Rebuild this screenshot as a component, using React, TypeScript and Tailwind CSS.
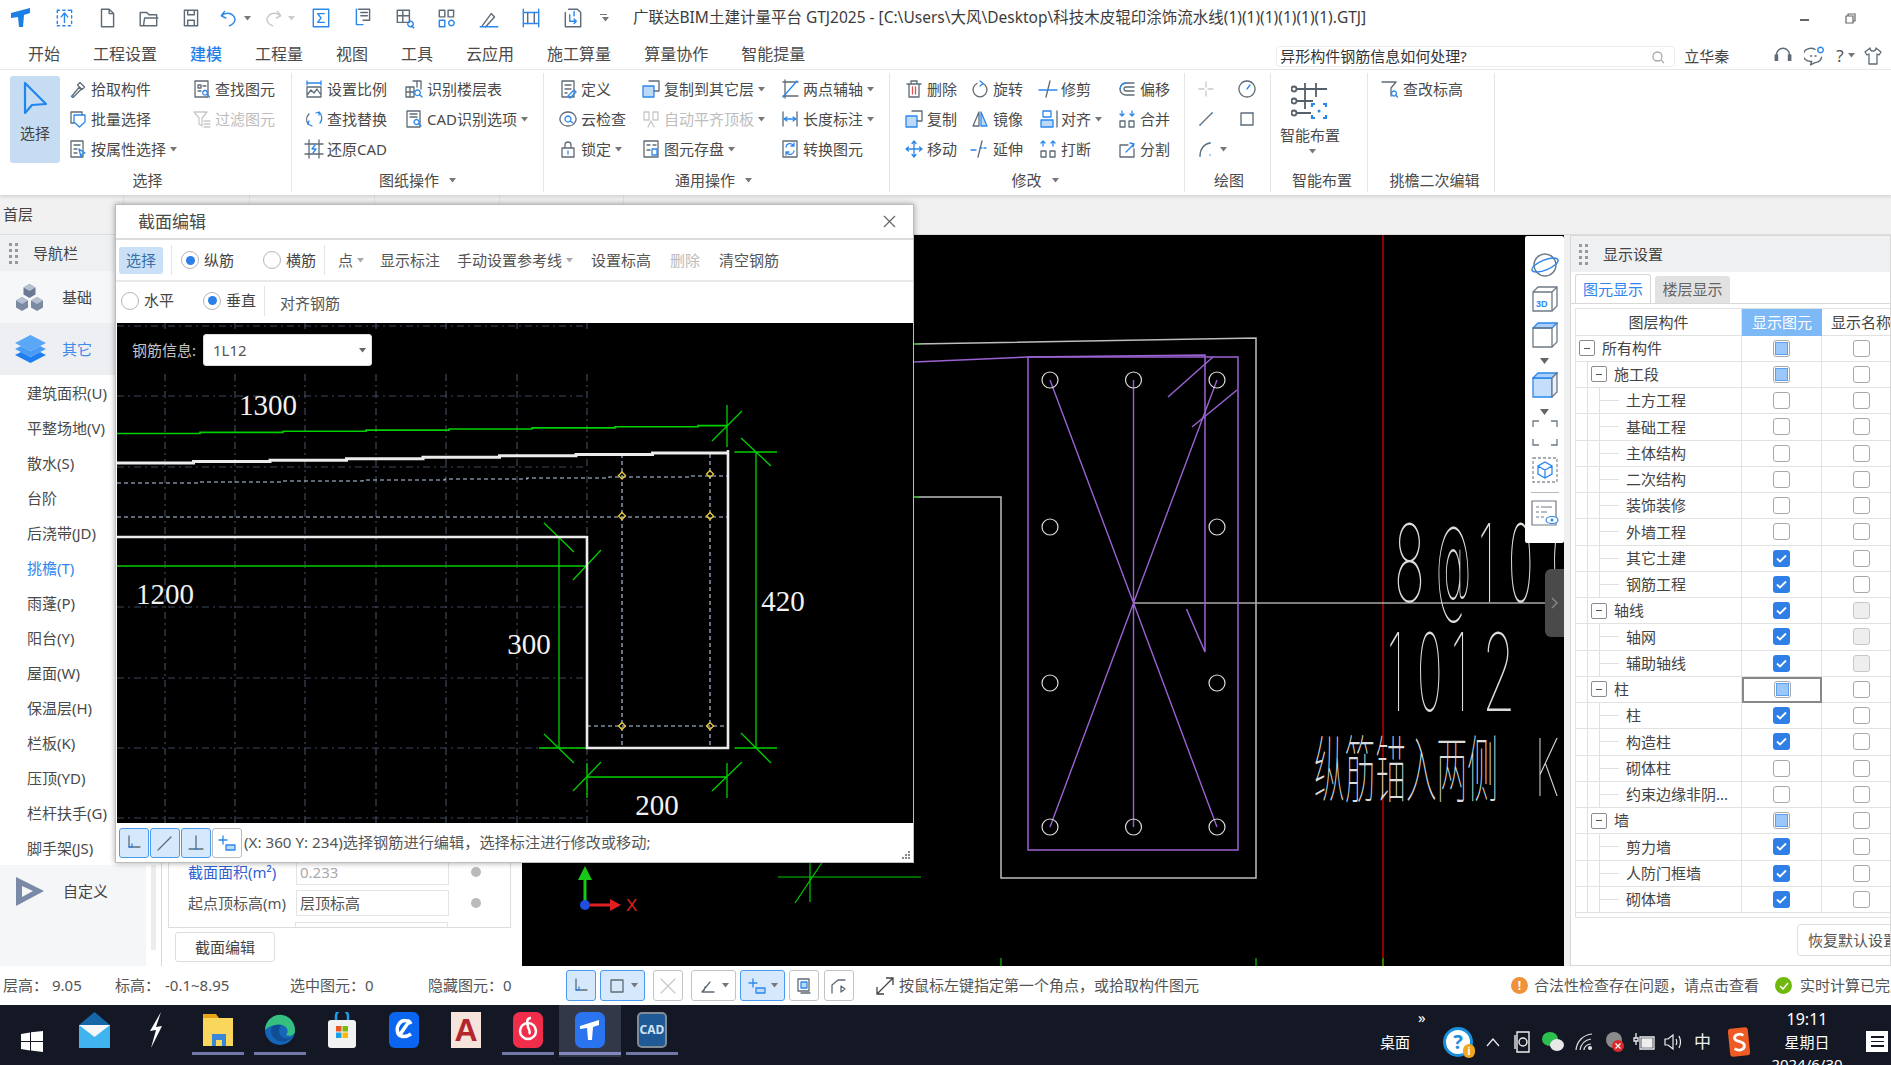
import React from "react";

const GRAY = "#5f6b76";
const BLUE = "#2b87ec";

type IcProps = { g?: string; b?: string; r?: string; light?: boolean; size?: number; fillB?: string };

function Ic({ g, b, r, light, size = 20, fillB }: IcProps) {
  return (
    <svg width={size} height={size} viewBox="0 0 20 20" fill="none" strokeWidth="1.3" strokeLinecap="round" strokeLinejoin="round">
      {fillB && <path d={fillB} fill="#bcd9f8" stroke={BLUE} />}
      {g && <path d={g} stroke={light ? "#c6c9cc" : GRAY} />}
      {b && <path d={b} stroke={light ? "#c6c9cc" : BLUE} />}
      {r && <path d={r} stroke="#d9534f" />}
    </svg>
  );
}

function Caret({ c = "#777" }: { c?: string }) {
  return (
    <svg width="7" height="5" viewBox="0 0 7 5" className="ml-[4px] shrink-0">
      <path d="M0 0h7L3.500 4.500z" fill={c} />
    </svg>
  );
}

type RibbonItem = { icon: IcProps; label: string; caret?: boolean; off?: boolean };

function Item({ icon, label, caret, off }: RibbonItem) {
  return (
    <div className="flex items-center h-[30px] whitespace-nowrap">
      <div className="w-[22px] h-[22px] flex items-center justify-center shrink-0">
        <Ic {...icon} light={off} />
      </div>
      <span className={off ? "ml-[2px] text-[15px] text-[#bdbdbd]" : "ml-[2px] text-[15px] text-[#4a4a4a]"}>{label}</span>
      {caret && <Caret />}
    </div>
  );
}

function GroupLabel({ text, caret }: { text: string; caret?: boolean }) {
  return (
    <div className="h-[30px] flex items-center justify-center text-[15px] text-[#4a4a4a]">
      {text}
      {caret && <span className="ml-[6px]"><Caret /></span>}
    </div>
  );
}

const pickIcon: IcProps = { g: "M3.500 17.500l7.500-9 2 2-8 8zM12 3.500l4.500 4.500-2.500 2.500-4.500-4.500z", b: "M3.500 17.500l1.500-1" };
const copyIcon: IcProps = { g: "M8 2h10v10h-5", fillB: "M2 7h11v11H2z" };

const col1a: RibbonItem[] = [
  { icon: pickIcon, label: "拾取构件" },
  { icon: { g: "M3 3h11v3M3 3v11h3", b: "M6 6h11v7l-5.500 5L6 13z" }, label: "批量选择" },
  { icon: { g: "M3 2h12v16H3zM6 6h6M6 10h3M6 14h3", b: "M11 10l6 4-3 1-1 3z" }, label: "按属性选择", caret: true },
];
const col1b: RibbonItem[] = [
  { icon: { g: "M3 2h13v16H3zM6 6h3v3H6zM11 7h3M6 12h3", b: "M13 11.500a2.300 2.300 0 1 0 .01 0M15 15.500l2.500 2.500" }, label: "查找图元" },
  { icon: { g: "M2 3h13l-5 6v8l-3-2V9zM12 12h6M12 15h6M12 18h6" }, label: "过滤图元", off: true },
];
const col2a: RibbonItem[] = [
  { icon: { b: "M3 2v4M17 2v4M3 4h14", g: "M3 8h14v10H3zM3 16l4-5 3 3 3-4 4 6" }, label: "设置比例" },
  { icon: { g: "M5 5a8 8 0 0 0-1 10", b: "M15 3a8 8 0 0 1 1 11M12 4l3-1v3M8 17l-4-2 1-3" }, label: "查找替换" },
  { icon: { g: "M1 5h18M1 15h18M5 1v18M15 1v18", b: "M11 6l-3 4h4l-3 4" }, label: "还原CAD" },
];
const col2b: RibbonItem[] = [
  { icon: { g: "M9 2h8v8M2 8h8v10H2zM2 13h8M6 8v10M13 2v6", b: "M13.500 11a2.800 2.800 0 1 0 .01 0M15.500 15.500l2.500 2.500" }, label: "识别楼层表" },
  { icon: { g: "M3 2h13v16H3zM6 5h7M6 8h7", b: "M12.500 10.500a2.500 2.500 0 1 0 .01 0M14.500 14.500l2.500 2.500" }, label: "CAD识别选项", caret: true },
];
const col3a: RibbonItem[] = [
  { icon: { g: "M4 2h12v16H4zM7 6h6M7 10h6M7 14h2", b: "M10 17l6-6 2 2-6 6z" }, label: "定义" },
  { icon: { g: "M10 3a8 7 0 1 1-.01 0", b: "M10 7a3 3 0 1 1-.01 0M12 12l3 2" }, label: "云检查" },
  { icon: { g: "M4 9h12v9H4zM7 9V6a3 3 0 0 1 6 0v3", b: "M10 12v3" }, label: "锁定", caret: true },
];
const col3b: RibbonItem[] = [
  { icon: copyIcon, label: "复制到其它层", caret: true },
  { icon: { g: "M3 3h5v8H3zM12 3h5v8h-5zM7 18l3-6 3 6" }, label: "自动平齐顶板", caret: true, off: true },
  { icon: { g: "M3 2h14v16H3zM6 6h3M12 6h3M6 11h3", b: "M11 10h5v6h-5z" }, label: "图元存盘", caret: true },
];
const col3c: RibbonItem[] = [
  { icon: { g: "M3 3h15M3 17h15M5 1v18", b: "M3 18L17 2" }, label: "两点辅轴", caret: true },
  { icon: { g: "M3 3v14M17 3v14", b: "M4 10h12M4 10l3-2M4 10l3 2M16 10l-3-2M16 10l-3 2" }, label: "长度标注", caret: true },
  { icon: { g: "M3 2h14v16H3z", b: "M6 8a4 4 0 0 1 7-2l1 1M14 12a4 4 0 0 1-7 2l-1-1M14 4v3h-3M6 16v-3h3" }, label: "转换图元" },
];
const col4a: RibbonItem[] = [
  { icon: { g: "M3 5h14M7 5V2h6v3M5 5v13h10V5", r: "M8.500 8v7M11.500 8v7" }, label: "删除" },
  { icon: copyIcon, label: "复制" },
  { icon: { b: "M10 3v14M3 10h14M10 2l-2 2.500M10 2l2 2.500M10 18l-2-2.500M10 18l2-2.500M2 10l2.500-2M2 10l2.500 2M18 10l-2.500-2M18 10l-2.500 2" }, label: "移动" },
];
const col4b: RibbonItem[] = [
  { icon: { g: "M7 4.500a7 7 0 1 0 6 0", b: "M10 2l3 2.500-3 2.500" }, label: "旋转" },
  { icon: { g: "M9 3L3 17h6z", fillB: "M11 3l6 14h-6z" }, label: "镜像" },
  { icon: { g: "M12 2L8 18", b: "M1 11h5M10 9h2M14 9h2" }, label: "延伸" },
];
const col4c: RibbonItem[] = [
  { icon: { g: "M12 2L8 18", b: "M1 11h18" }, label: "修剪" },
  { icon: { g: "M19 2v16", fillB: "M3 11h12v7H3z", b: "M5 2h8v6H5z" }, label: "对齐", caret: true },
  { icon: { g: "M3 12h5v6H3zM12 12h5v6h-5z", b: "M5 2v5M15 2v5M5 2L3 4M5 2l2 2M15 2l-2 2M15 2l2 2" }, label: "打断" },
];
const col4d: RibbonItem[] = [
  { icon: { g: "M17 4H9a6 6 0 0 0 0 12h8M17 8H9a2 2 0 0 0 0 4h8", b: "M3 10a6 6 0 0 1 6-6" }, label: "偏移" },
  { icon: { g: "M3 12h5v6H3zM12 12h5v6h-5z", b: "M5 2v5M15 2v5M5 7L3 5M5 7l2-2M15 7l-2-2M15 7l2-2" }, label: "合并" },
  { icon: { g: "M3 6h8M3 6v12h14V10", b: "M9 13l8-8M13 4l4 1-1 3" }, label: "分割" },
];

const tabs = ["开始", "工程设置", "建模", "工程量", "视图", "工具", "云应用", "施工算量", "算量协作", "智能提量"];

function Column({ items, cls }: { items: RibbonItem[]; cls: string }) {
  return (
    <div className={cls}>
      {items.map((it) => (
        <Item key={it.label} {...it} />
      ))}
    </div>
  );
}

const qat: IcProps[] = [
  { b: "M3 3h2M8 3h2M13 3h2M3 17h2M8 17h2M13 17h2M3 3v2M3 8v2M3 13v2M16 3v2M16 8v2M16 13v2M9.500 14V6M6.500 9l3-3.500 3 3.500" },
  { g: "M5 2h7l4 4v12H5zM12 2v4h4" },
  { g: "M2 5h6l2 2h7v10H2zM5 17l1-7h12" },
  { g: "M4 3h12v14H4zM7 3v4h6V3M7 17v-5h6v5" },
  { b: "M6 4L3 8l4 2M3.500 8a7 7 0 0 1 12 3c0 3-2 5-5 6" },
  { g: "M14 4l3 4-4 2M16.500 8a7 7 0 0 0-12 3c0 3 2 5 5 6", light: true },
  { b: "M3 2h14v16H3zM13 6H7l3 4-3 4h6" },
  { b: "M4 2v14h6", g: "M6 2h10v10H10M8 5h6M8 8h6" },
  { g: "M3 3h11v11H3zM3 8h11M8 3v11", b: "M15 13a2.500 2.500 0 1 0 .01 0M16 17l2 2" },
  { g: "M3 3h5v6H3zM11 3h5v6h-5z", b: "M3 12h5v6H3zM14 12a2.500 2.500 0 1 0 .01 0" },
  { g: "M4 17l8-11 3 3-8 9", b: "M2 18h16" },
  { b: "M3 2v16M17 2v16M3 5h14M3 15h14", g: "M7 5v10M13 5v10" },
  { g: "M6 2h8l3 3v13H3V5", b: "M7 7v6h6M13 13l-2-2M13 13l-2 2M11 4v4" },
];

function TitleBar() {
  return (
    <div className="h-[36px] flex items-center shrink-0">
      <div className="w-[44px] flex justify-center">
        <svg width="24" height="24" viewBox="0 0 24 24">
          <path d="M1 7L20 2v5l-6 2-1 12-4 0-1-10-7 1z" fill="#1b7fe3" />
        </svg>
      </div>
      {qat.map((ic, i) => (
        <div key={i} className={i === 4 || i === 5 ? "w-[44px] flex items-center justify-center" : "w-[42px] flex justify-center"}>
          <Ic {...ic} size={22} />
          {(i === 4 || i === 5) && <Caret c={i === 4 ? "#777" : "#ccc"} />}
        </div>
      ))}
      <div className="w-[18px] flex flex-col items-center gap-[2px]">
        <span className="w-[7px] h-[1px] bg-[#777]" />
        <Caret />
      </div>
      <div className="ml-[21px] text-[15.500px] text-[#3c3c3c] whitespace-nowrap">
        广联达BIM土建计量平台 GTJ2025 - [C:\Users\大风\Desktop\科技木皮辊印涂饰流水线(1)(1)(1)(1)(1)(1).GTJ]
      </div>
      <div className="ml-auto flex items-center pr-[35px] gap-[36px]">
        <span className="w-[9px] h-[2px] bg-[#666] mt-[4px]" />
        <svg width="11" height="11" viewBox="0 0 11 11" fill="none" stroke="#666" strokeWidth="1.200">
          <path d="M3 3V1h7v7H8M1 3h7v7H1z" />
        </svg>
      </div>
    </div>
  );
}

function TabsBar() {
  return (
    <div className="h-[34px] flex items-center border-b border-[#e8e8e8] shrink-0 relative">
      <div className="flex pl-[28px] gap-[33px] relative top-[1px]">
        {tabs.map((t) => (
          <div key={t} className={t === "建模" ? "relative text-[16px] font-medium text-[#1f7fe8] leading-[32px]" : "relative text-[16px] text-[#4a4a4a] leading-[32px]"}>
            {t}
            {t === "建模" && <span className="absolute left-[-4px] right-[-4px] bottom-[-2px] h-[2px] bg-[#1f7fe8]" />}
          </div>
        ))}
      </div>
      <div className="ml-[471px] w-[399px] h-[21px] mt-[8px] border border-[#eee] rounded-[3px] flex items-center pl-[3px] text-[15px] text-[#333]">
        异形构件钢筋信息如何处理?
        <svg className="ml-auto mr-[9px]" width="14" height="14" viewBox="0 0 14 14" fill="none" stroke="#aaa" strokeWidth="1.300">
          <circle cx="6.500" cy="6.500" r="4.500" />
          <path d="M10 10l3 3" />
        </svg>
      </div>
      <span className="ml-[9px] mt-[8px] text-[15px] text-[#444]">立华秦</span>
      <div className="ml-[43px] mt-[6px]">
        <Ic g="M4 13V9a6 6 0 0 1 12 0v4M3 9v5h2V9zM15 9v5h2V9z" size={22} />
      </div>
      <div className="ml-[10px] mt-[6px]">
        <Ic g="M10 4a7 6 0 1 0-3 11l-1 3 4-2a7 6 0 0 0 6-5M6 10h1M10 10h1" b="M15 2a2.500 2.500 0 1 0 .01 0" size={22} />
      </div>
      <span className="ml-[10px] mt-[6px] text-[17px] text-[#555]">?</span>
      <span className="mt-[6px]"><Caret /></span>
      <div className="ml-[8px] mt-[6px]">
        <Ic g="M7 2L2 6l2 3 2-1v10h8V8l2 1 2-3-5-4a3 3 0 0 1-6 0z" size={20} />
      </div>
    </div>
  );
}

function Ribbon() {
  return (
    <div className="h-[125px] flex shrink-0 shadow-[0_2px_3px_rgba(0,0,0,0.12)] relative z-10 bg-white">
      <div className="w-[292px] flex flex-col border-r border-[#e6e6e6] my-[3px]">
        <div className="h-[90px] flex mt-[1px] shrink-0">
          <div className="ml-[10px] mt-[2px] w-[50px] h-[87px] bg-[#c5dcf3] rounded-[3px] flex flex-col items-center">
            <svg className="mt-[5px]" width="26" height="34" viewBox="0 0 26 34" fill="none" stroke="#1f86ee" strokeWidth="2.200" strokeLinejoin="round">
              <path d="M3 2v30l7-8 14-1z" />
            </svg>
            <span className="mt-[7px] text-[15px] text-[#444]">选择</span>
          </div>
          <Column items={col1a} cls="ml-[7px] w-[124px]" />
          <Column items={col1b} cls="" />
        </div>
        <div className="mt-[1px] pl-[4px]"><GroupLabel text="选择" /></div>
      </div>
      <div className="w-[252px] flex flex-col border-r border-[#e6e6e6] my-[3px]">
        <div className="h-[90px] flex mt-[1px] pl-[11px] shrink-0">
          <Column items={col2a} cls="w-[100px]" />
          <Column items={col2b} cls="" />
        </div>
        <div className="mt-[1px]"><GroupLabel text="图纸操作" caret /></div>
      </div>
      <div className="w-[346px] flex flex-col border-r border-[#e6e6e6] my-[3px]">
        <div className="h-[90px] flex mt-[1px] pl-[13px] shrink-0">
          <Column items={col3a} cls="w-[83px]" />
          <Column items={col3b} cls="w-[139px]" />
          <Column items={col3c} cls="" />
        </div>
        <div className="mt-[1px] pr-[6px]"><GroupLabel text="通用操作" caret /></div>
      </div>
      <div className="w-[295px] flex flex-col border-r border-[#e6e6e6] my-[3px]">
        <div className="h-[90px] flex mt-[1px] pl-[13px] shrink-0">
          <Column items={col4a} cls="w-[66px]" />
          <Column items={col4b} cls="w-[68px]" />
          <Column items={col4c} cls="w-[79px]" />
          <Column items={col4d} cls="" />
        </div>
        <div className="mt-[1px] pr-[4px]"><GroupLabel text="修改" caret /></div>
      </div>
      <div className="w-[86px] flex flex-col border-r border-[#e6e6e6] my-[3px]">
        <div className="h-[90px] mt-[1px] grid grid-cols-[41px_41px] grid-rows-[30px_30px_30px] pl-[11px] shrink-0">
          <div className="h-[30px] flex items-center"><Ic g="M10 3v5M10 12v5M3 10h5M12 10h5" light /></div>
          <div className="h-[30px] flex items-center"><Ic g="M10 2a8 8 0 1 1-.01 0" b="M10 10l3-4" /></div>
          <div className="h-[30px] flex items-center"><Ic g="M4 16L16 4" b="M4 16h.1M16 4h.1" /></div>
          <div className="h-[30px] flex items-center"><Ic g="M4 4h12v12H4z" b="M16 4h.1M4 16h.1" /></div>
          <div className="h-[30px] flex items-center col-span-2">
            <Ic g="M4 17c0-7 4-12 10-13" b="M4 17h.1M14 4h.1M14 16h.1" />
            <Caret />
          </div>
        </div>
        <div className="mt-[1px] pl-[3px]"><GroupLabel text="绘图" /></div>
      </div>
      <div className="w-[97px] flex flex-col border-r border-[#e6e6e6] my-[3px]">
        <div className="h-[90px] mt-[1px] flex flex-col items-center w-[78px] shrink-0">
          <svg className="mt-[7px]" width="38" height="38" viewBox="0 0 38 38" fill="none" strokeWidth="1.800">
            <path d="M2 8h34M2 20h20M2 32h18M14 2v26M25 2v14" stroke="#55606b" />
            <circle cx="3" cy="8" r="2.500" fill="#fff" stroke="#55606b" />
            <circle cx="3" cy="20" r="2.500" fill="#fff" stroke="#55606b" />
            <circle cx="3" cy="32" r="2.500" fill="#fff" stroke="#55606b" />
            <path d="M24 23h-3v3M32 23h3v3M24 37h-3v-3M32 37h3v-3" stroke="#2b87ec" strokeWidth="2.200" />
            <circle cx="28" cy="30" r="1.500" fill="#2b87ec" />
          </svg>
          <span className="mt-[6px] text-[15px] text-[#4a4a4a] leading-[20px]">智能布置</span>
          <span className="mt-[4px]"><Caret /></span>
        </div>
        <div className="mt-[1px] pl-[6px]"><GroupLabel text="智能布置" /></div>
      </div>
      <div className="w-[127px] flex flex-col border-r border-[#e6e6e6] my-[3px]">
        <div className="h-[90px] mt-[1px] pl-[11px] shrink-0">
          <Item icon={{ g: "M2 3h14l-5 6v8", b: "M14 12a2.500 2.500 0 1 0 .01 0M15.500 16l2 2" }} label="查改标高" />
        </div>
        <div className="mt-[1px] pl-[7px]"><GroupLabel text="挑檐二次编辑" /></div>
      </div>
    </div>
  );
}

function Grip() {
  return (
    <div className="grid grid-cols-2 gap-x-[3px] gap-y-[3px]">
      {[0, 1, 2, 3, 4, 5, 6, 7].map((i) => (
        <span key={i} className="w-[3px] h-[3px] bg-[#999]" />
      ))}
    </div>
  );
}

const navItems = ["建筑面积(U)", "平整场地(V)", "散水(S)", "台阶", "后浇带(JD)", "挑檐(T)", "雨蓬(P)", "阳台(Y)", "屋面(W)", "保温层(H)", "栏板(K)", "压顶(YD)", "栏杆扶手(G)", "脚手架(JS)"];

function LeftNav() {
  return (
    <div className="w-[162px] flex flex-col shrink-0 border-r border-[#d8d8d8] bg-[#f5f6f8]">
      <div className="h-[36px] flex items-center pl-[9px] bg-[#eff0f2] shrink-0">
        <Grip />
        <span className="ml-[15px] text-[15px] text-[#444]">导航栏</span>
      </div>
      <div className="h-[52px] flex items-center pl-[15px] bg-[#f6f7f9] shrink-0">
        <svg width="29" height="29" viewBox="0 0 29 29">
          <path d="M14.500 1l6 3.500v7l-6 3.500-6-3.500v-7z" fill="#6a7a94" />
          <path d="M7 14l6 3.500v7L7 28l-6-3.500v-7z" fill="#7b8aa3" />
          <path d="M22 14l6 3.500v7L22 28l-6-3.500v-7z" fill="#7b8aa3" />
          <path d="M8.500 4.500l6 3.500 6-3.500-6-3.500zM1 17.500L7 21l6-3.500L7 14zM16 17.500l6 3.500 6-3.500L22 14z" fill="#b6c0cf" />
        </svg>
        <span className="ml-[18px] text-[15px] text-[#444]">基础</span>
      </div>
      <div className="h-[52px] flex items-center pl-[15px] bg-[#edeff3] shrink-0">
        <svg width="31" height="28" viewBox="0 0 31 28">
          <path d="M0 20l15.500 8L31 20l-6-3-9.500 5-9.500-5z" fill="#1f7ff0" />
          <path d="M0 14l15.500 8L31 14l-6-3-9.500 5L6 11z" fill="#4a9bf5" />
          <path d="M0 8l15.500 8L31 8 15.500 0z" fill="#5aa6f7" />
        </svg>
        <span className="ml-[16px] text-[15px] text-[#3f8bea]">其它</span>
      </div>
      <div className="h-[490px] bg-white shrink-0 pt-[1px] pl-[27px]">
        {navItems.map((n) => (
          <div key={n} className={n === "挑檐(T)" ? "h-[35px] flex items-center text-[15px] text-[#2f86ee] whitespace-nowrap" : "h-[35px] flex items-center text-[15px] text-[#4a4a4a] whitespace-nowrap"}>
            {n}
          </div>
        ))}
      </div>
      <div className="flex-1 flex">
        <div className="flex-1 flex items-start pl-[15px] pt-[11px]">
          <svg width="29" height="30" viewBox="0 0 29 30">
            <path d="M1 1l28 14L1 30z" fill="#7a8aa6" />
            <path d="M7 10l11 5-11 6z" fill="#f5f6f8" />
          </svg>
          <span className="ml-[19px] mt-[4px] text-[15px] text-[#444]">自定义</span>
        </div>
        <div className="w-[15px] bg-white flex justify-center">
          <span className="w-[5px] h-[85px] bg-[#ececec]" />
        </div>
      </div>
    </div>
  );
}

function PropPanel() {
  return (
    <div className="w-[360px] shrink-0 bg-white flex flex-col justify-end pl-[6px] pb-[4px]">
      <div className="w-[343px] h-[71px] border-l border-b border-r border-[#ddd] overflow-hidden shrink-0">
        <div className="flex items-center h-[30px]">
          <span className="ml-[19px] w-[108px] text-[15px] text-[#2f5fd0] whitespace-nowrap">截面面积(m²)</span>
          <div className="w-[153px] h-[26px] border border-[#e4e4e4] pl-[3px] text-[15px] text-[#aaa] leading-[24px]">0.233</div>
          <span className="ml-[22px] w-[10px] h-[10px] rounded-full bg-[#bbb]" />
        </div>
        <div className="flex items-center h-[30px] mt-[1px]">
          <span className="ml-[19px] w-[108px] text-[15px] text-[#555] whitespace-nowrap">起点顶标高(m)</span>
          <div className="w-[153px] h-[26px] border border-[#e4e4e4] pl-[3px] text-[15px] text-[#555] leading-[24px]">层顶标高</div>
          <span className="ml-[22px] w-[10px] h-[10px] rounded-full bg-[#bbb]" />
        </div>
        <div className="ml-[126px] w-[153px] h-[10px] border border-[#e4e4e4] mt-[4px]" />
      </div>
      <div className="ml-[7px] mt-[4px] w-[100px] h-[30px] border border-[#ddd] rounded-[3px] flex items-center justify-center text-[15px] text-[#444] shrink-0">
        截面编辑
      </div>
    </div>
  );
}

const barX = [1050, 1133.500, 1217];

// SHX style lettering on the drawing: each glyph is squeezed on its own
const noteGlyphs: [string, number, number, number][] = [
  ["8", 1394, 602, 0.48], ["@", 1436, 602, 0.33], ["1", 1478, 602, 0.44], ["0", 1508, 602, 0.4], ["0", 1551, 602, 0.4],
  ["1", 1387, 711, 0.44], ["0", 1417, 711, 0.4], ["1", 1451, 711, 0.44], ["2", 1482, 711, 0.5],
];

function CadView() {
  return (
    <svg className="block" width="1042" height="731" viewBox="522 235 1042 731" fill="none">
      <rect x="522" y="235" width="1042" height="731" fill="#000" />
      <path d="M914 344L1256 338V878H1001V497H914" stroke="#bdbdbd" strokeWidth="1.500" />
      <path d="M914 344h5M914 497h5" stroke="#0c0" />
      <path d="M1383 235v731" stroke="#c00000" strokeWidth="1.500" />
      <path d="M1133.500 603H1545" stroke="#a8a8a8" strokeWidth="1.500" />
      <path d="M1028 357h210v493h-210z" stroke="#9a62d2" strokeWidth="1.500" />
      <path d="M914 362L1028 357L1205 355V652L1186.500 609M1168 397L1213 357M1192 427L1237 390" stroke="#9a62d2" strokeWidth="1.500" />
      <path d="M1133.500 603L1050 380M1133.500 603V380M1133.500 603L1217 380M1133.500 603L1050 827M1133.500 603V827M1133.500 603L1217 827" stroke="#9a62d2" strokeWidth="1.400" />
      {barX.map((x) => (
        <g key={x}>
          <circle cx={x} cy="380" r="8" stroke="#ddd" strokeWidth="1.200" />
          <circle cx={x} cy="827" r="8" stroke="#ddd" strokeWidth="1.200" />
        </g>
      ))}
      {[1050, 1217].map((x) => (
        <g key={x}>
          <circle cx={x} cy="527" r="8" stroke="#ddd" strokeWidth="1.200" />
          <circle cx={x} cy="683" r="8" stroke="#ddd" strokeWidth="1.200" />
        </g>
      ))}
      <path d="M1001 958v8M1256 958v8M1383 958v8M778 877h143M810 862v40M795 903L825 858" stroke="#0c0" strokeWidth="1.200" />
      <path d="M585 870v35" stroke="#18c718" strokeWidth="3" />
      <path d="M578 880l7-14 7 14z" fill="#18c718" />
      <path d="M590 905h22" stroke="#e02020" strokeWidth="3" />
      <path d="M610 899l11 6-11 6z" fill="#e02020" />
      <circle cx="585" cy="905" r="5" fill="#1f4fe0" />
      <text x="626" y="911" fontSize="17" fontFamily="Liberation Sans, sans-serif" fill="#e02020">X</text>
      <g fill="#dcdcdc" fontFamily="Inter, sans-serif" fontWeight="100" fontSize="108">
        {noteGlyphs.map(([ch, x, y, sx]) => (
          <text key={`${x}-${y}`} transform={`translate(${x} ${y}) scale(${sx} 1)`}>{ch}</text>
        ))}
      </g>
      <text transform="translate(1314 796) scale(0.42 1)" fontSize="73" fill="#dcdcdc" fontWeight="100" fontFamily="Noto Sans CJK SC, sans-serif">纵筋锚入两侧</text>
      <text transform="translate(1535 796) scale(0.5 1)" fontSize="80" fill="#dcdcdc" fontWeight="100" fontFamily="Inter, sans-serif">K</text>
    </svg>
  );
}

function stepped(x0: number, y0: number, x1: number, y1: number, w: number) {
  const n = Math.ceil((x1 - x0) / w);
  const dy = (y1 - y0) / n;
  let d = `M${x0} ${y0}`;
  for (let i = 1; i <= n; i++) {
    const x = Math.min(x0 + w * i, x1);
    const y = y0 + dy * (i - 1);
    d += `L${x} ${y}`;
    if (i < n) d += `L${x} ${y + dy}`;
  }
  return d;
}

function SectionCanvas() {
  const gridV = [48, 118, 188, 259, 329, 400, 470];
  const gridH = [3, 73, 144, 214, 284, 355, 425, 495];
  const dots = [[505, 152.500], [593, 151], [505, 193], [593, 193], [505, 403], [593, 403]];
  return (
    <div className="relative w-[796px] h-[500px] bg-black">
      <svg className="block" width="796" height="500" viewBox="0 0 796 500" fill="none">
        <g stroke="#3f4759" strokeDasharray="7 4 2 4" strokeWidth="1.200">
          {gridV.map((x) => (
            <path key={x} d={`M${x} 0V500`} />
          ))}
          {gridH.map((y) => (
            <path key={y} d={`M0 ${y}H470`} />
          ))}
        </g>
        <rect x="0" y="6" width="480" height="44" fill="#000" />
        <g stroke="#00d000" strokeWidth="1.300">
          <path d={stepped(0, 110.500, 610, 101.500, 83)} strokeWidth="1.600" />
          <path d="M0 243H470" stroke="#009a00" strokeWidth="2" />
          <path d="M610 82v42M595 118L625 88" />
          <path d="M442 214V425M422 214h48M422 425h48M427 200L457 229M427 411L457 440" />
          <path d="M470 218v45M456 257L484 227" />
          <path d="M639 129V425M617.500 129H660M617.500 425H660M624 115L654 143M624 410L654 440" />
          <path d="M470 454H610M470 440v35M610 440v35M456 468L484 439M595 468L625 439" />
        </g>
        <g stroke="#bcd0ea" strokeWidth="1.100" strokeDasharray="4 3">
          <path d={stepped(0, 160, 611, 152, 82)} />
          <path d="M0 194H611M470 403H611M505 131V422M593 131V425" />
        </g>
        <path d={stepped(0, 140, 611, 128.500, 76.500)} stroke="#ececec" strokeWidth="3" />
        <path d="M611 127V425H470V214H0" stroke="#ececec" strokeWidth="2.600" />
        {dots.map(([x, y]) => (
          <path key={`${x}-${y}`} d={`M${x} ${y - 3.500}l3.500 3.500-3.500 3.500-3.500-3.500z`} stroke="#e8c93a" strokeWidth="1.300" />
        ))}
        <g fill="#f2f2f2" fontFamily="Liberation Serif, serif" fontSize="29" textAnchor="middle">
          <text x="151" y="92">1300</text>
          <text x="48" y="281">1200</text>
          <text x="412" y="331">300</text>
          <text x="666" y="288">420</text>
          <text x="540" y="492">200</text>
        </g>
      </svg>
      <div className="absolute left-[15px] top-[11px] flex items-center">
        <span className="text-[15px] text-[#c4c4c4]">钢筋信息:</span>
        <div className="ml-[7px] w-[169px] h-[32px] bg-white rounded-[3px] border border-[#ddd] flex items-center pl-[9px] text-[15px] text-[#555]">
          1L12
          <span className="ml-auto mr-[5px]"><Caret c="#666" /></span>
        </div>
      </div>
    </div>
  );
}

function Radio({ on, label, cls }: { on?: boolean; label: string; cls: string }) {
  return (
    <div className={`flex items-center ${cls}`}>
      <span className="w-[18px] h-[18px] rounded-full border-[1.500px] border-[#b5b5b5] bg-white flex items-center justify-center">
        {on && <span className="w-[9px] h-[9px] rounded-full bg-[#2b7fe6]" />}
      </span>
      <span className="ml-[5px] text-[15px] text-[#444]">{label}</span>
    </div>
  );
}

function DialogBtn({ on, children }: { on?: boolean; children: React.ReactNode }) {
  return (
    <div className={on ? "w-[30px] h-[30px] rounded-[3px] border border-[#4a9bf0] bg-[#d6e8fb] flex items-center justify-center" : "w-[30px] h-[30px] rounded-[3px] border border-[#bbb] bg-white flex items-center justify-center"}>
      {children}
    </div>
  );
}

const angleIcon = { g: "M5 3v11h11", b: "M5 14h3v-3" };

function SectionDialog() {
  return (
    <div className="absolute left-[115px] top-[204px] w-[799px] h-[659px] bg-white border border-[#bdbdbd] shadow-[0_0_6px_rgba(0,0,0,0.35)] z-20 flex flex-col">
      <div className="h-[33px] flex items-center pl-[22px] shrink-0">
        <span className="text-[17px] text-[#4a4a4a]">截面编辑</span>
        <svg className="ml-auto mr-[17px]" width="13" height="13" viewBox="0 0 13 13" stroke="#666" strokeWidth="1.200">
          <path d="M1 1l11 11M12 1L1 12" />
        </svg>
      </div>
      <div className="h-[2px] bg-[#dcdcdc] shrink-0" />
      <div className="h-[40px] flex items-center pl-[2px] ml-[1px] shrink-0">
        <span className="w-[44px] h-[27px] rounded-[3px] bg-[#c9e0f7] text-[15px] text-[#3a6ea8] flex items-center justify-center">选择</span>
        <span className="ml-[8px] w-[1px] h-[30px] bg-[#e4e4e4]" />
        <Radio on label="纵筋" cls="ml-[9px]" />
        <Radio label="横筋" cls="ml-[29px]" />
        <span className="ml-[8px] w-[1px] h-[30px] bg-[#e4e4e4]" />
        <span className="ml-[13px] text-[15px] text-[#555] flex items-center">点<Caret c="#aaa" /></span>
        <span className="ml-[16px] text-[15px] text-[#555]">显示标注</span>
        <span className="ml-[17px] text-[15px] text-[#555] flex items-center">手动设置参考线<Caret c="#aaa" /></span>
        <span className="ml-[18px] text-[15px] text-[#555]">设置标高</span>
        <span className="ml-[19px] text-[15px] text-[#bbb]">删除</span>
        <span className="ml-[19px] text-[15px] text-[#555]">清空钢筋</span>
      </div>
      <div className="h-[2px] bg-[#e8e8e8] shrink-0" />
      <div className="h-[41px] flex items-center pl-[4px] ml-[1px] pb-[4px] shrink-0">
        <Radio label="水平" cls="" />
        <Radio on label="垂直" cls="ml-[29px]" />
        <span className="ml-[8px] w-[1px] h-[30px] bg-[#e4e4e4]" />
        <span className="ml-[15px] text-[15px] text-[#555] mt-[5px]">对齐钢筋</span>
      </div>
      <div className="ml-[1px] shrink-0"><SectionCanvas /></div>
      <div className="flex-1 flex items-center pl-[2px] ml-[1px] relative">
        <div className="flex gap-[1px]">
          <DialogBtn on><Ic {...angleIcon} /></DialogBtn>
          <DialogBtn on><Ic g="M4 16L16 4M3 17h.1" /></DialogBtn>
          <DialogBtn on><Ic g="M10 3v13M3 16h14" b="M9 16h2" /></DialogBtn>
          <DialogBtn><Ic b="M6 3v8M2 7h8" fillB="M9 12h9v5H9z" /></DialogBtn>
        </div>
        <span className="ml-[2px] text-[15.200px] text-[#555] whitespace-nowrap">(X: 360 Y: 234)选择钢筋进行编辑，选择标注进行修改或移动;</span>
        <div className="absolute right-[3px] bottom-[3px] grid grid-cols-3 gap-[1px]">
          {[0, 1, 2, 3, 4, 5, 6, 7, 8].map((i) => (
            <span key={i} className={i === 0 || i === 1 || i === 3 ? "w-[2px] h-[2px]" : "w-[2px] h-[2px] bg-[#888]"} />
          ))}
        </div>
      </div>
    </div>
  );
}

function ViewToolbar() {
  return (
    <div className="absolute right-[0px] top-[1px] w-[39px] h-[307px] bg-white rounded-[2px] flex flex-col items-center pt-[16px] z-10">
      <svg width="28" height="26" viewBox="0 0 28 26" fill="none" strokeWidth="1.400">
        <circle cx="14" cy="13" r="11" stroke="#6f7a85" />
        <ellipse cx="14" cy="13" rx="14" ry="5" stroke="#2b87ec" transform="rotate(-22 14 13)" />
      </svg>
      <div className="mt-[8px]">
        <svg width="26" height="26" viewBox="0 0 26 26" fill="none" strokeWidth="1.300">
          <path d="M1 6h19v19H1zM1 6l5-5h19v19l-5 5M20 6l5-5" stroke="#6f7a85" />
          <text x="4" y="21" fontSize="9" fontWeight="700" fill="#2b87ec" stroke="none" fontFamily="Liberation Sans, sans-serif">3D</text>
        </svg>
      </div>
      <div className="mt-[10px]">
        <svg width="26" height="26" viewBox="0 0 26 26" fill="none" strokeWidth="1.300">
          <path d="M1 6l5-5h19l-5 5z" fill="#a9cffa" stroke="#2b87ec" />
          <path d="M1 6h19v19H1zM20 25l5-5V1" stroke="#6f7a85" />
        </svg>
      </div>
      <svg className="mt-[10px]" width="9" height="6" viewBox="0 0 9 6"><path d="M0 0h9L4.500 6z" fill="#666" /></svg>
      <div className="mt-[8px]">
        <svg width="26" height="26" viewBox="0 0 26 26" fill="none" strokeWidth="1.300">
          <path d="M1 6h19v19H1z" fill="#c4defb" stroke="#2b87ec" />
          <path d="M1 6l5-5h19l-5 5z" fill="#a9cffa" stroke="#2b87ec" />
          <path d="M20 25l5-5V1L20 6z" fill="#e6f1fd" stroke="#6f7a85" />
        </svg>
      </div>
      <svg className="mt-[11px]" width="9" height="6" viewBox="0 0 9 6"><path d="M0 0h9L4.500 6z" fill="#666" /></svg>
      <svg className="mt-[5px]" width="26" height="26" viewBox="0 0 26 26" fill="none" stroke="#6f7a85" strokeWidth="1.300">
        <path d="M1 7V1h6M19 1h6v6M25 19v6h-6M7 25H1v-6" />
      </svg>
      <div className="mt-[11px]">
        <svg width="26" height="26" viewBox="0 0 26 26" fill="none" strokeWidth="1.300">
          <path d="M1 1h24v24H1z" stroke="#8a939c" strokeDasharray="3 2" />
          <path d="M13 5l7 4v8l-7 4-7-4V9zM6 9l7 4 7-4M13 13v8" stroke="#2b87ec" />
        </svg>
      </div>
      <span className="mt-[9px] w-[28px] h-[1px] bg-[#bbb]" />
      <div className="mt-[7px]">
        <svg width="28" height="26" viewBox="0 0 28 26" fill="none" strokeWidth="1.200">
          <path d="M1 1h24v24H1zM5 7h3M10 7h11M5 12h3M10 12h6M5 17h3M10 17h3" stroke="#6f7a85" />
          <ellipse cx="21" cy="20" rx="6" ry="3.500" fill="#fff" stroke="#2b87ec" />
          <circle cx="21" cy="20" r="1.500" fill="#2b87ec" />
        </svg>
      </div>
    </div>
  );
}

type Row = [string, number, "p" | "c" | "u", boolean?];
const rows: Row[] = [
  ["所有构件", 0, "p"], ["施工段", 1, "p"], ["土方工程", 2, "u"], ["基础工程", 2, "u"], ["主体结构", 2, "u"], ["二次结构", 2, "u"],
  ["装饰装修", 2, "u"], ["外墙工程", 2, "u"], ["其它土建", 2, "c"], ["钢筋工程", 2, "c"], ["轴线", 1, "c", true], ["轴网", 2, "c", true],
  ["辅助轴线", 2, "c", true], ["柱", 1, "p"], ["柱", 2, "c"], ["构造柱", 2, "c"], ["砌体柱", 2, "u"], ["约束边缘非阴...", 2, "u"],
  ["墙", 1, "p"], ["剪力墙", 2, "c"], ["人防门框墙", 2, "c"], ["砌体墙", 2, "c"],
];

function Check({ state, off }: { state: "p" | "c" | "u"; off?: boolean }) {
  if (state === "c") {
    return (
      <span className="w-[17px] h-[17px] rounded-[3px] bg-[#2f7fe6] flex items-center justify-center">
        <svg width="11" height="9" viewBox="0 0 11 9" fill="none" stroke="#fff" strokeWidth="1.800"><path d="M1 4.500l3 3 6-6" /></svg>
      </span>
    );
  }
  if (state === "p") {
    return (
      <span className="w-[17px] h-[17px] rounded-[3px] border border-[#a8a8a8] flex items-center justify-center">
        <span className="w-[13px] h-[13px] bg-[#9cc7fb] border border-[#5aa0ee]" />
      </span>
    );
  }
  return <span className={off ? "w-[17px] h-[17px] rounded-[3px] border border-[#c8c8c8] bg-[#eeeeee]" : "w-[17px] h-[17px] rounded-[3px] border border-[#a8a8a8] bg-white"} />;
}

function Minus() {
  return (
    <span className="w-[16px] h-[16px] rounded-[2px] border border-[#8c8c8c] bg-white flex items-center justify-center shrink-0 relative z-10">
      <span className="w-[6px] h-[1px] bg-[#555]" />
    </span>
  );
}

function DisplayPanel() {
  return (
    <div className="w-[321px] shrink-0 border border-[#d8d8d8] bg-white flex flex-col overflow-hidden">
      <div className="h-[36px] bg-[#eff0f2] flex items-center pl-[8px] shrink-0">
        <Grip />
        <span className="ml-[15px] text-[15px] text-[#444]">显示设置</span>
      </div>
      <div className="h-[32px] flex items-end pl-[4px] gap-[4px] shrink-0 border-b border-[#d8d8d8]">
        <span className="w-[76px] h-[29px] border border-b-0 border-[#d8d8d8] rounded-t-[3px] flex items-center justify-center text-[15px] text-[#2f86ee]">图元显示</span>
        <span className="w-[75px] h-[27px] bg-[#e2e2e2] rounded-t-[3px] flex items-center justify-center text-[15px] text-[#666]">楼层显示</span>
      </div>
      <div className="ml-[4px] mt-[4px] border-t border-l border-b border-[#e2e2e2] h-[610px] shrink-0 overflow-hidden">
        <div className="grid grid-cols-[166px_80px_70px] h-[26.500px] text-[15px]">
          <div className="flex items-center justify-center text-[#444] border-r border-b border-[#e2e2e2]">图层构件</div>
          <div className="flex items-center justify-center text-white bg-[#7db8f7]">显示图元</div>
          <div className="flex items-center pl-[9px] text-[#444] whitespace-nowrap border-b border-[#e2e2e2]">显示名称</div>
        </div>
        {rows.map(([name, level, state, off], i) => (
          <div key={i} className="grid grid-cols-[166px_80px_70px] h-[26.250px] text-[15px] border-b border-[#e2e2e2]">
            <div className="relative flex items-center border-r border-[#e2e2e2] text-[#444]">
              {level > 0 && <span className="absolute left-[11px] top-0 bottom-0 w-[1px] bg-[#e0e0e0]" />}
              {level === 2 && <span className="absolute left-[23px] top-0 bottom-0 w-[1px] bg-[#e0e0e0]" />}
              {level === 2 && <span className="absolute left-[24px] top-[12px] w-[19px] h-[1px] bg-[#e0e0e0]" />}
              {level === 0 && <div className="ml-[3px] flex items-center"><Minus /><span className="ml-[7px]">{name}</span></div>}
              {level === 1 && <div className="ml-[15px] flex items-center"><Minus /><span className="ml-[7px]">{name}</span></div>}
              {level === 2 && <span className="ml-[50px] whitespace-nowrap">{name}</span>}
            </div>
            <div className={name === "柱" && level === 1 ? "flex items-center justify-center border-2 border-[#888] border-b-2 -mb-[1px]" : "flex items-center justify-center border-r border-[#e2e2e2]"}>
              <Check state={state} />
            </div>
            <div className="flex items-center pl-[31px]">
              <Check state="u" off={off} />
            </div>
          </div>
        ))}
      </div>
      <div className="ml-[226px] mt-[6px] w-[120px] h-[32px] border border-[#ddd] rounded-[4px] flex items-center pl-[10px] text-[15px] text-[#555] whitespace-nowrap shrink-0">
        恢复默认设置
      </div>
    </div>
  );
}

function StBtn({ on, wide, children }: { on?: boolean; wide?: boolean; children: React.ReactNode }) {
  const size = wide ? "w-[45px]" : "w-[30px]";
  return (
    <div className={`${size} h-[31px] rounded-[3px] border flex items-center justify-center ${on ? "border-[#4a9bf0] bg-[#d6e8fb]" : "border-[#c4c4c4] bg-white"}`}>
      {children}
    </div>
  );
}

function StatusBar() {
  return (
    <div className="h-[39px] flex items-center bg-white shrink-0 text-[15px] text-[#555] whitespace-nowrap relative overflow-hidden [&>*]:shrink-0">
      <span className="ml-[3px] w-[49px]">层高：</span>
      <span className="w-[63px]">9.05</span>
      <span className="w-[50px]">标高：</span>
      <span className="w-[125px]">-0.1~8.95</span>
      <span className="w-[138px]">选中图元：0</span>
      <span className="w-[138px]">隐藏图元：0</span>
      <div className="flex items-center">
        <StBtn on><Ic {...angleIcon} /></StBtn>
        <div className="ml-[4px]"><StBtn on wide><Ic g="M4 4h12v12H4z" /><Caret /></StBtn></div>
        <div className="ml-[8px]"><StBtn><Ic g="M3 3l14 14M17 3L3 17" light /></StBtn></div>
        <div className="ml-[8px]"><StBtn wide><Ic g="M4 16h12M4 16l8-10M4 16c2-1 3-3 3-5" /><Caret /></StBtn></div>
        <div className="ml-[4px]"><StBtn on wide><Ic b="M6 3v8M2 7h8" fillB="M9 12h9v5H9z" /><Caret /></StBtn></div>
        <div className="ml-[4px]"><StBtn><Ic g="M4 3h11v12H4zM7 17h9" fillB="M7 6h6v6H7z" /></StBtn></div>
        <div className="ml-[5px]"><StBtn><Ic g="M3 17V9l6-5h7M12 10l4 3-4 3z" /></StBtn></div>
      </div>
      <svg className="ml-[21px]" width="20" height="20" viewBox="0 0 20 20" fill="none" stroke="#444" strokeWidth="1.300">
        <path d="M2 18L18 2M11 2h7v7M2 11v7h7" />
      </svg>
      <span className="ml-[4px]">按鼠标左键指定第一个角点，或拾取构件图元</span>
      <span className="ml-[312px] w-[17px] h-[17px] rounded-full bg-[#f0923a] text-white text-[12px] leading-[17px] text-center font-bold">!</span>
      <span className="ml-[6px]">合法性检查存在问题，请点击查看</span>
      <span className="ml-[16px] w-[17px] h-[17px] rounded-full bg-[#6fb90e] flex items-center justify-center">
        <svg width="10" height="8" viewBox="0 0 10 8" fill="none" stroke="#fff" strokeWidth="1.500"><path d="M1 4l3 3 5-6" /></svg>
      </span>
      <span className="ml-[8px]">实时计算已完成</span>
    </div>
  );
}

const apps: { key: string; bar?: boolean; active?: boolean; node: React.ReactNode }[] = [
  { key: "mail", node: (
    <svg width="31" height="36" viewBox="0 0 31 36">
      <path d="M0 13L15.500 0 31 13z" fill="#1567a8" />
      <path d="M0 13h31v23H0z" fill="#3fb4ee" />
      <path d="M0 13h31L15.500 25z" fill="#f4f8fb" />
    </svg>
  ) },
  { key: "spark", node: (
    <svg width="14" height="36" viewBox="0 0 14 36"><path d="M12 0L1 19l6-1-5 18 11-22-6 1z" fill="#fff" /></svg>
  ) },
  { key: "folder", bar: true, node: (
    <svg width="30" height="36" viewBox="0 0 30 36">
      <path d="M0 2h13l3 4H0z" fill="#e8a317" />
      <path d="M0 6h30v28H0z" fill="#f9d65c" />
      <path d="M9 22h14v12h-4v-6h-6v6H9z" fill="#3a86d8" />
    </svg>
  ) },
  { key: "edge", bar: true, node: (
    <svg width="32" height="36" viewBox="0 0 32 36">
      <circle cx="16" cy="18" r="15" fill="#1565b8" />
      <path d="M1 18C2 6 12 2 18 3c8 1 13 8 13 16 0 4-5 6-9 4 3-3 2-9-5-10-6-1-12 1-16 5z" fill="#35c07f" />
      <path d="M7 18c0 9 8 13 15 11 2-1 4-2 6-4-5 3-13 1-13-6 0-3 1-5 3-6-5-1-11 0-11 5z" fill="#0f4d95" />
    </svg>
  ) },
  { key: "store", node: (
    <svg width="30" height="36" viewBox="0 0 30 36">
      <path d="M9 8V4a6 6 0 0 1 12 0v4" fill="none" stroke="#1aa0e8" strokeWidth="2.500" />
      <rect x="1" y="8" width="28" height="28" rx="3" fill="#f2f2f2" />
      <rect x="9" y="14" width="5.500" height="5.500" fill="#e8562a" />
      <rect x="15.500" y="14" width="5.500" height="5.500" fill="#7fba00" />
      <rect x="9" y="20.500" width="5.500" height="5.500" fill="#1aa0e8" />
      <rect x="15.500" y="20.500" width="5.500" height="5.500" fill="#fdb900" />
    </svg>
  ) },
  { key: "elink", node: (
    <svg width="30" height="36" viewBox="0 0 30 36">
      <rect width="30" height="36" rx="6" fill="#0a66f0" />
      <path d="M21 8L10 24M22 12c-2-4-9-5-12 0-3 4-2 11 2 12 3 1 7 0 10-2" fill="none" stroke="#fff" strokeWidth="3.500" />
    </svg>
  ) },
  { key: "acad", node: (
    <div className="w-[30px] h-[36px] bg-[#f6e3dc] text-[#b3262d] text-[32px] leading-[36px] font-bold text-center font-['Liberation_Sans',sans-serif]">A</div>
  ) },
  { key: "music", bar: true, node: (
    <svg width="30" height="36" viewBox="0 0 30 36">
      <rect width="30" height="36" rx="7" fill="#f02d4a" />
      <circle cx="15" cy="19" r="8" fill="none" stroke="#fff" strokeWidth="2.500" />
      <path d="M18 6c-5 0-4 5-3 9 1 3 3 5 1 7" fill="none" stroke="#fff" strokeWidth="2.500" />
    </svg>
  ) },
  { key: "gtj", bar: true, active: true, node: (
    <svg width="30" height="36" viewBox="0 0 30 36">
      <rect width="30" height="36" rx="7" fill="#2b74f0" />
      <path d="M5 14L24 8v5l-6 2-1 13h-4l-1-12-7 1z" fill="#fff" />
    </svg>
  ) },
  { key: "cad", bar: true, node: (
    <div className="w-[30px] h-[36px] rounded-[5px] bg-[#205a96] border-[2px] border-[#7f8c96] text-[#cfe2f5] text-[12px] font-bold leading-[32px] text-center">CAD</div>
  ) },
];

function Taskbar() {
  return (
    <div className="h-[60px] bg-[#141824] flex shrink-0 overflow-hidden relative text-white">
      <div className="w-[63px] flex justify-center pt-[26px]">
        <svg width="22" height="21" viewBox="0 0 22 21" fill="#fff">
          <path d="M0 3l9-1.500V10H0zM10 1.300L22 0v10H10zM0 11h9v8.500L0 18zM10 11h12v10l-12-1.500z" />
        </svg>
      </div>
      {apps.map((a) => (
        <div key={a.key} className={a.active ? "w-[62px] h-[52px] bg-[#333849] flex flex-col items-center pt-[7px] relative" : "w-[62px] h-[52px] flex flex-col items-center pt-[7px] relative"}>
          {a.node}
          {a.bar && <span className={a.active ? "absolute left-0 right-0 bottom-[2px] h-[3px] bg-[#8088bd]" : "absolute left-[5px] right-[5px] bottom-[2px] h-[3px] bg-[#7078a8]"} />}
        </div>
      ))}
      <div className="ml-auto flex items-start relative">
        <span className="absolute left-[38px] top-[1px] text-[15px]">»</span>
        <span className="mt-[26px] text-[15px] mr-[33px]">桌面</span>
        <div className="mt-[22px] flex items-center text-[#eee]">
          <div className="w-[30px] h-[30px] rounded-full bg-white border-[3px] border-[#1a90dc] text-[#1a90dc] font-bold text-[20px] leading-[24px] text-center relative">
            ?
            <span className="absolute right-[-5px] bottom-[-4px] w-[12px] h-[14px] rounded-full bg-[#f0a81e] text-white text-[10px] leading-[14px]">i</span>
          </div>
          <svg className="ml-[13px]" width="14" height="9" viewBox="0 0 14 9" fill="none" stroke="#eee" strokeWidth="1.200"><path d="M1 8l6-7 6 7" /></svg>
          <svg className="ml-[14px]" width="18" height="22" viewBox="0 0 18 22" fill="none" stroke="#eee" strokeWidth="1.400">
            <path d="M3 1h12v20H3zM1 4v14" />
            <circle cx="9" cy="11" r="4" />
          </svg>
          <svg className="ml-[9px]" width="24" height="22" viewBox="0 0 24 22">
            <ellipse cx="9" cy="8" rx="8" ry="7" fill="#2cc14e" />
            <ellipse cx="16" cy="14" rx="7" ry="6" fill="#e8e8e8" />
          </svg>
          <svg className="ml-[9px]" width="20" height="20" viewBox="0 0 20 20" fill="none" stroke="#ddd" strokeWidth="1.200">
            <path d="M2 18C3 9 9 3 18 2M6 18c1-6 5-10 11-11M10 18c0-3 3-6 7-6" />
            <circle cx="16" cy="16" r="1.500" fill="#ddd" />
          </svg>
          <svg className="ml-[11px]" width="20" height="22" viewBox="0 0 20 22">
            <circle cx="9" cy="9" r="8" fill="#8b8b8b" />
            <circle cx="13" cy="15" r="6" fill="#d9292b" />
            <path d="M10.500 12.500l5 5M15.500 12.500l-5 5" stroke="#fff" strokeWidth="1.200" />
          </svg>
          <svg className="ml-[8px]" width="22" height="20" viewBox="0 0 22 20" fill="none" stroke="#eee" strokeWidth="1.300">
            <path d="M7 5h14v12H7z" />
            <path d="M9 7h10v8H9z" fill="#eee" />
            <path d="M3 1v5M1 6h4v3H1zM3 9v4" />
          </svg>
          <svg className="ml-[9px]" width="18" height="20" viewBox="0 0 18 20" fill="none" stroke="#eee" strokeWidth="1.200">
            <path d="M1 7v6h3l5 4V3L4 7zM12 7c1 2 1 4 0 6M15 4c2 4 2 8 0 12" />
          </svg>
          <span className="ml-[12px] text-[17px]">中</span>
          <svg className="ml-[17px] -rotate-6" width="22" height="30" viewBox="0 0 22 30">
            <rect x="1" y="1" width="20" height="28" rx="3" fill="#ef5b25" />
            <path d="M16 9c-3-3-9-2-9 2s9 3 9 8-7 5-10 2" fill="none" stroke="#fff" strokeWidth="2.800" />
          </svg>
        </div>
        <div className="w-[100px] ml-[7px] flex flex-col items-center text-[15px] leading-[21px] pt-[4px]">
          <span className="text-[16px]">19:11</span>
          <span className="mt-[2px]">星期日</span>
          <span className="mt-[1px]">2024/6/30</span>
        </div>
        <div className="w-[22px] h-[21px] mt-[26px] bg-white flex flex-col justify-center items-center gap-[3px] ml-[9px] mr-[3px]">
          <span className="w-[13px] h-[1.500px] bg-[#141824]" />
          <span className="w-[13px] h-[1.500px] bg-[#141824]" />
          <span className="w-[13px] h-[1.500px] bg-[#141824]" />
        </div>
      </div>
    </div>
  );
}

export default function App() {
  return (
    <div className="w-[1891px] h-[1065px] overflow-hidden relative flex flex-col bg-white font-['Noto_Sans','Noto_Sans_CJK_SC',sans-serif]">
      <TitleBar />
      <TabsBar />
      <Ribbon />
      <div className="h-[40px] bg-[#f1f1f1] shrink-0 flex text-[15px] text-[#444] border-b border-[#dedede]">
        <div className="w-[124px] flex items-center pl-[3px] border-r border-[#e2e2e2]">首层</div>
        <div className="w-[126px] border-r border-[#e2e2e2]" />
        <div className="w-[125px] border-r border-[#e2e2e2]" />
        <div className="w-[125px] border-r border-[#e2e2e2]" />
        <div className="w-[124px] border-r border-[#e2e2e2]" />
      </div>
      <div className="h-[731px] flex shrink-0 bg-[#f0f0f0]">
        <LeftNav />
        <PropPanel />
        <div className="w-[1042px] shrink-0 relative overflow-hidden">
          <CadView />
          <ViewToolbar />
          <div className="absolute right-0 top-[334px] w-[19px] h-[68px] bg-[#4a4a4a] rounded-l-[6px] flex items-center justify-center">
            <svg width="7" height="12" viewBox="0 0 7 12" fill="none" stroke="#8a8a8a" strokeWidth="1.300"><path d="M1 1l5 5-5 5" /></svg>
          </div>
        </div>
        <div className="w-[6px] shrink-0 bg-[#f0f0f0]" />
        <DisplayPanel />
      </div>
      <StatusBar />
      <Taskbar />
      <SectionDialog />
    </div>
  );
}
